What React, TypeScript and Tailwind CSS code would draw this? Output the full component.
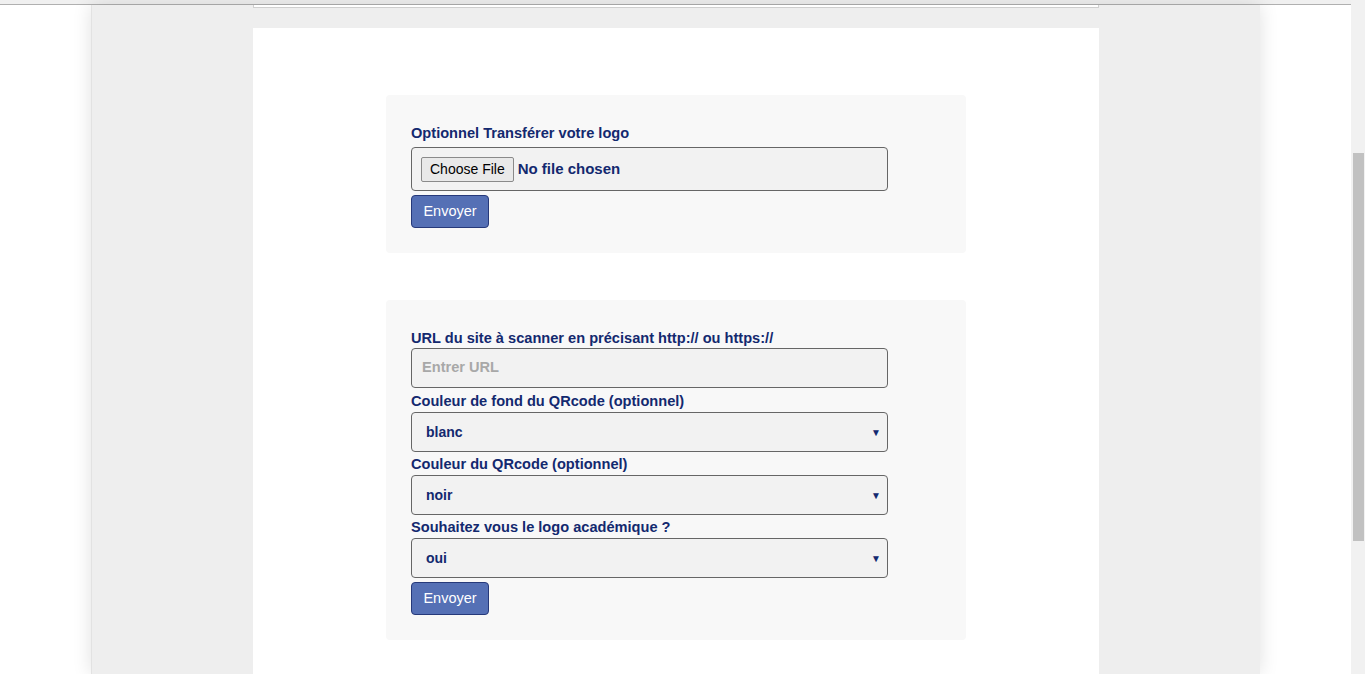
const label = 'block text-[14.6px] font-bold text-[#13296f] leading-[17px]';
const field = 'w-[477px] rounded-[4px] border border-[#666] bg-[#f2f2f2]';

function Envoyer() {
  return (
    <button className="mt-[4px] h-[33px] w-[78px] rounded-[4px] border border-[#26397a] bg-[#5570b5] text-[14.5px] text-white">
      Envoyer
    </button>
  );
}

function Select({ value }: { value: string }) {
  return (
    <div className={`${field} mt-[2px] flex h-[40px] items-center justify-between pl-[14px] pr-[6px]`}>
      <span className="text-[14px] font-bold text-[#13296f]">{value}</span>
      <span className="text-[10px] text-[#13296f]">▼</span>
    </div>
  );
}

export default function App() {
  return (
    <div className="flex h-[674px] w-[1365px] overflow-hidden bg-white font-['Liberation_Sans',Arial,sans-serif]">
      <div className="flex flex-1 flex-col">
        <div className="h-[5px] border-b border-[#b0b0b0] bg-[#f0f0f0]" />
        <div className="flex flex-1 justify-center">
          <div className="flex w-[1169px] flex-col items-center border-l border-[#e2e2e2] bg-[#eeeeee] shadow-[0_0_18px_rgba(0,0,0,0.12)]">
            <div className="h-[3px] w-[846px] border border-t-0 border-[#cfcfcf] bg-white" />
            <div className="mt-[20px] flex w-[846px] flex-1 flex-col items-center bg-white pt-[67px]">
              <div className="w-[580px] rounded-[4px] bg-[#f8f8f8] pl-[25px] pt-[30px] pb-[25px]">
                <label className={label}>Optionnel Transférer votre logo</label>
                <div className={`${field} mt-[5px] flex h-[44px] items-center pl-[9px]`}>
                  <span className="rounded-[2px] border border-[#8a8a8a] bg-[#e9e9e9] px-[8px] py-[1px] text-[14px] text-black">Choose File</span>
                  <span className="ml-[4px] text-[15px] font-bold text-[#13296f]">No file chosen</span>
                </div>
                <Envoyer />
              </div>
              <div className="mt-[47px] w-[580px] rounded-[4px] bg-[#f8f8f8] pl-[25px] pt-[30px] pb-[25px]">
                <label className={label}>URL du site à scanner en précisant http:// ou https://</label>
                <div className={`${field} mt-[1px] flex h-[40px] items-center pl-[10px]`}>
                  <span className="text-[14.6px] font-bold text-[#a8a8a8]">Entrer URL</span>
                </div>
                <label className={`${label} mt-[5px]`}>Couleur de fond du QRcode (optionnel)</label>
                <Select value="blanc" />
                <label className={`${label} mt-[4px]`}>Couleur du QRcode (optionnel)</label>
                <Select value="noir" />
                <label className={`${label} mt-[4px]`}>Souhaitez vous le logo académique ?</label>
                <Select value="oui" />
                <Envoyer />
              </div>
            </div>
          </div>
        </div>
      </div>
      <div className="flex w-[14px] flex-col bg-[#f1f1f1] pt-[153px] pl-[2px]">
        <div className="h-[388px] w-[11px] bg-[#c1c1c1]" />
      </div>
    </div>
  );
}
